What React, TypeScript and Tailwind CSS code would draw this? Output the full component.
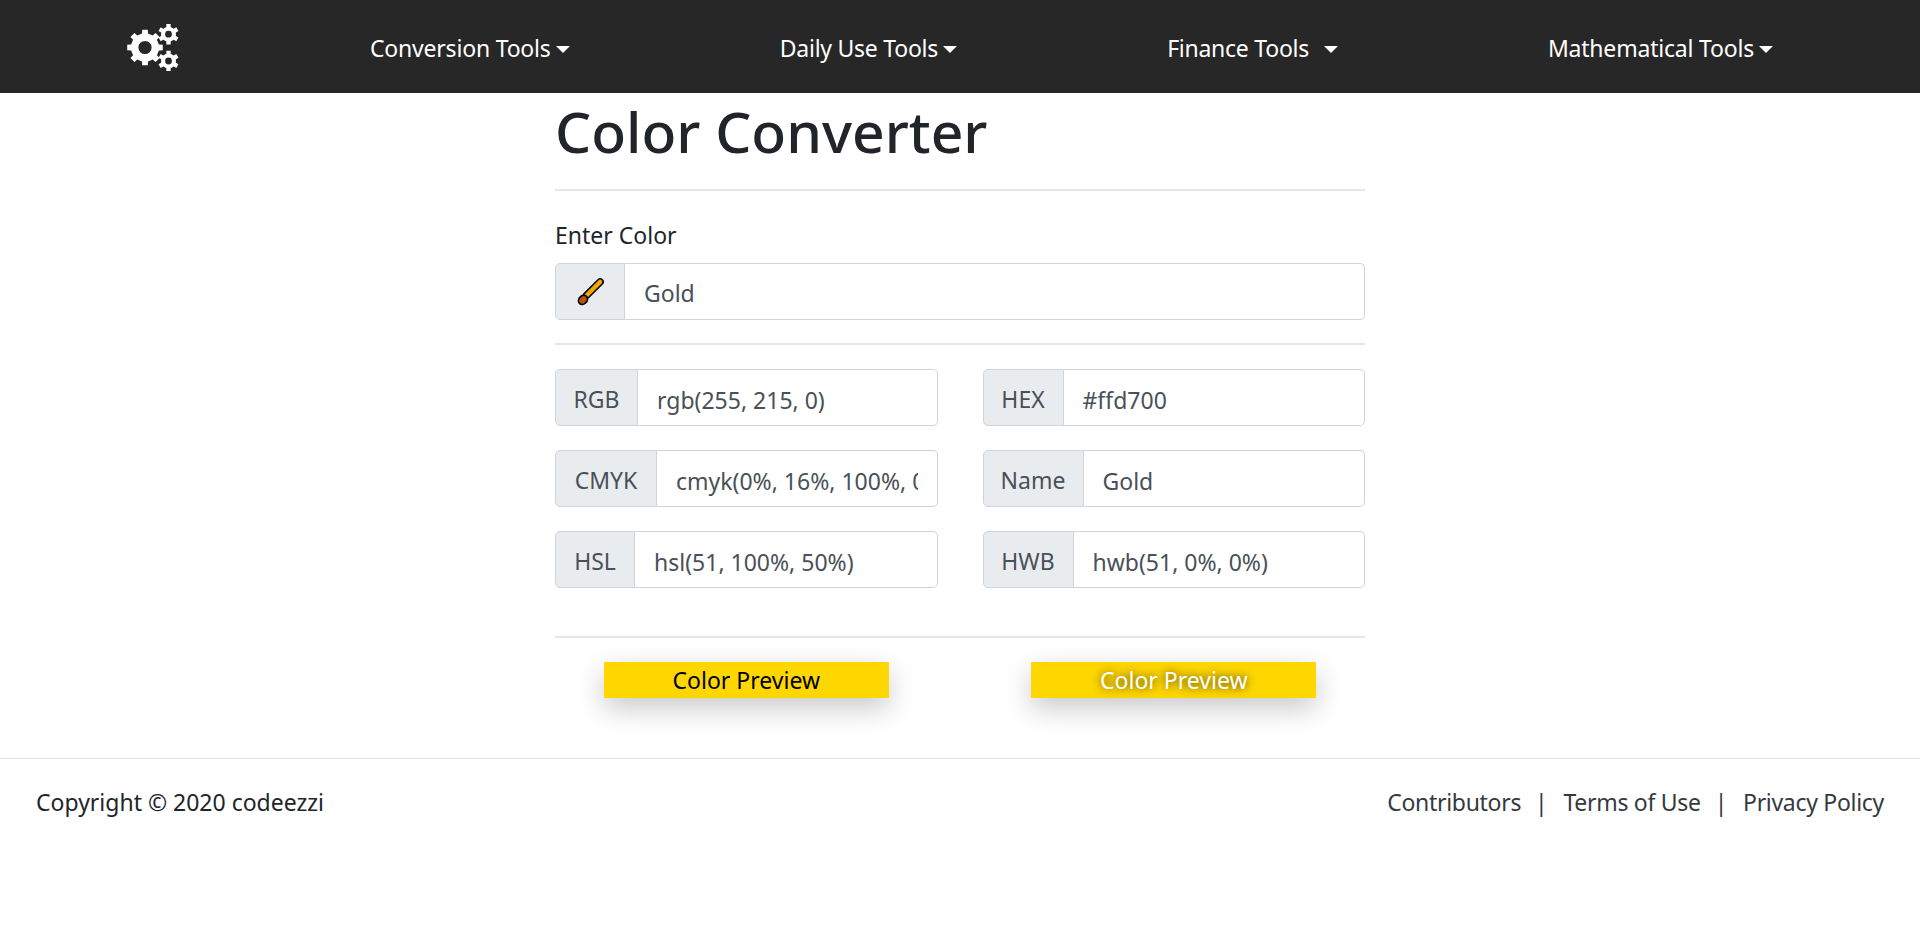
function gearPath(cx: number, cy: number, outer: number, inner: number, hole: number, teeth: number) {
  const step = (Math.PI * 2) / teeth;
  const pts: string[] = [];
  for (let i = 0; i < teeth; i++) {
    const a = i * step - Math.PI / 2;
    const w = step * 0.2;
    const b = step * 0.27;
    const list: [number, number][] = [
      [inner, a - b],
      [outer, a - w],
      [outer, a + w],
      [inner, a + b],
    ];
    for (const [r, t] of list) {
      pts.push(`${(cx + r * Math.cos(t)).toFixed(2)} ${(cy + r * Math.sin(t)).toFixed(2)}`);
    }
  }
  const ring = `M${cx - hole} ${cy}a${hole} ${hole} 0 1 0 ${hole * 2} 0a${hole} ${hole} 0 1 0 ${-hole * 2} 0Z`;
  return `M${pts.join("L")}Z${ring}`;
}

function Cogs() {
  return (
    <svg width="52" height="47" viewBox="0 0 52 47" fill="#fff" fillRule="evenodd">
      <path d={gearPath(18, 23.5, 18, 14.2, 6.6, 8)} />
      <path d={gearPath(41.5, 10.2, 10.5, 7.6, 3.4, 6)} />
      <path d={gearPath(41.5, 37, 10.5, 7.6, 3.4, 6)} />
    </svg>
  );
}

function Caret({ className = "" }: { className?: string }) {
  return <span className={`inline-block w-0 h-0 align-[4px] border-x-[7px] border-x-transparent border-t-[7px] border-t-white ${className}`} />;
}

function Brush() {
  return (
    <svg width="32" height="32" viewBox="0 0 30 30">
      <path d="M11.5 18.5 L24.5 5.5" stroke="#000" strokeWidth="7" strokeLinecap="round" fill="none" />
      <path d="M11.5 18.5 L24.5 5.5" stroke="#f5a800" strokeWidth="4" strokeLinecap="round" fill="none" />
      <ellipse cx="8.4" cy="22.4" rx="4.6" ry="3.8" transform="rotate(-45 8.4 22.4)" fill="#b8500f" stroke="#000" strokeWidth="1.6" />
    </svg>
  );
}

function Field({ label, value, addon }: { label?: string; value: string; addon: string }) {
  return (
    <div className="flex h-[57px]">
      <div className={`flex items-center justify-center shrink-0 bg-[#e9ecef] border border-[#ced4da] rounded-l-[5px] text-[#495057] ${label ? "pt-[4px]" : ""} ${addon}`}>
        {label ?? <Brush />}
      </div>
      <input
        readOnly
        value={value}
        className={`flex-1 min-w-0 h-full px-[19px] bg-white border border-l-0 border-[#ced4da] rounded-r-[5px] text-[#495057] text-[23px] outline-none ${label ? "pt-[4px]" : "pt-[2px]"}`}
      />
    </div>
  );
}

export default function App() {
  return (
    <div className="min-h-[928px] bg-white text-[23px] text-[#212529] font-['Noto_Sans','Open_Sans',sans-serif]">
      <nav className="flex items-center h-[93px] bg-[#272727] pl-[127px] pr-[147px] text-white">
        <div className="flex items-center pt-[2px]">
          <Cogs />
        </div>
        <div className="flex flex-1 items-center justify-between ml-[191px] pt-[4px]">
          <a className="whitespace-nowrap tracking-[-0.2px]">Conversion Tools<Caret className="ml-[5px]" /></a>
          <a className="whitespace-nowrap tracking-[-0.25px]">Daily Use Tools<Caret className="ml-[5px]" /></a>
          <a className="whitespace-nowrap tracking-[-0.25px]">Finance Tools <Caret className="ml-[9px]" /></a>
          <a className="whitespace-nowrap tracking-[-0.2px]">Mathematical Tools<Caret className="ml-[5px]" /></a>
        </div>
      </nav>

      <main className="w-[810px] mx-auto">
        <h1 className="text-[57px] leading-[67px] font-medium pt-[5px]">Color Converter</h1>
        <hr className="mt-[24px] border-t-2 border-[#e6e6e6]" />
        <label className="block mt-[27px] leading-[34px] h-[45px]">Enter Color</label>
        <Field value="Gold" addon="w-[70px]" />
        <hr className="mt-[23px] border-t-2 border-[#e6e6e6]" />
        <div className="grid grid-cols-2 gap-x-[45px] gap-y-[24px] mt-[24px]">
          <Field label="RGB" value="rgb(255, 215, 0)" addon="w-[83px]" />
          <Field label="HEX" value="#ffd700" addon="w-[81px]" />
          <Field label="CMYK" value="cmyk(0%, 16%, 100%, 0%)" addon="w-[102px]" />
          <Field label="Name" value="Gold" addon="w-[101px]" />
          <Field label="HSL" value="hsl(51, 100%, 50%)" addon="w-[80px]" />
          <Field label="HWB" value="hwb(51, 0%, 0%)" addon="w-[91px]" />
        </div>
        <hr className="mt-[48px] border-t-2 border-[#e6e6e6]" />
        <div className="grid grid-cols-2 gap-x-[45px] mt-[24px]">
          <div className="mx-auto w-[285px] h-[36px] pt-[1px] bg-[#ffd700] flex items-center justify-center text-black shadow-[0_10px_28px_rgba(0,0,0,0.22)]">
            Color Preview
          </div>
          <div className="mx-auto w-[285px] h-[36px] pt-[1px] bg-[#ffd700] flex items-center justify-center text-white shadow-[0_10px_28px_rgba(0,0,0,0.22)] [text-shadow:0_0_10px_rgba(0,0,0,0.8)]">
            Color Preview
          </div>
        </div>
      </main>

      <footer className="mt-[60px] border-t border-[#e3e3e3] h-[90px] px-[36px] pb-[2px] flex items-center justify-between">
        <span>Copyright © 2020 codeezzi</span>
        <div className="flex items-center text-[#343a40] tracking-[-0.3px]">
          <a>Contributors</a>
          <span className="ml-[14px] mr-[16px]">|</span>
          <a>Terms of Use</a>
          <span className="ml-[14px] mr-[16px]">|</span>
          <a>Privacy Policy</a>
        </div>
      </footer>
    </div>
  );
}
